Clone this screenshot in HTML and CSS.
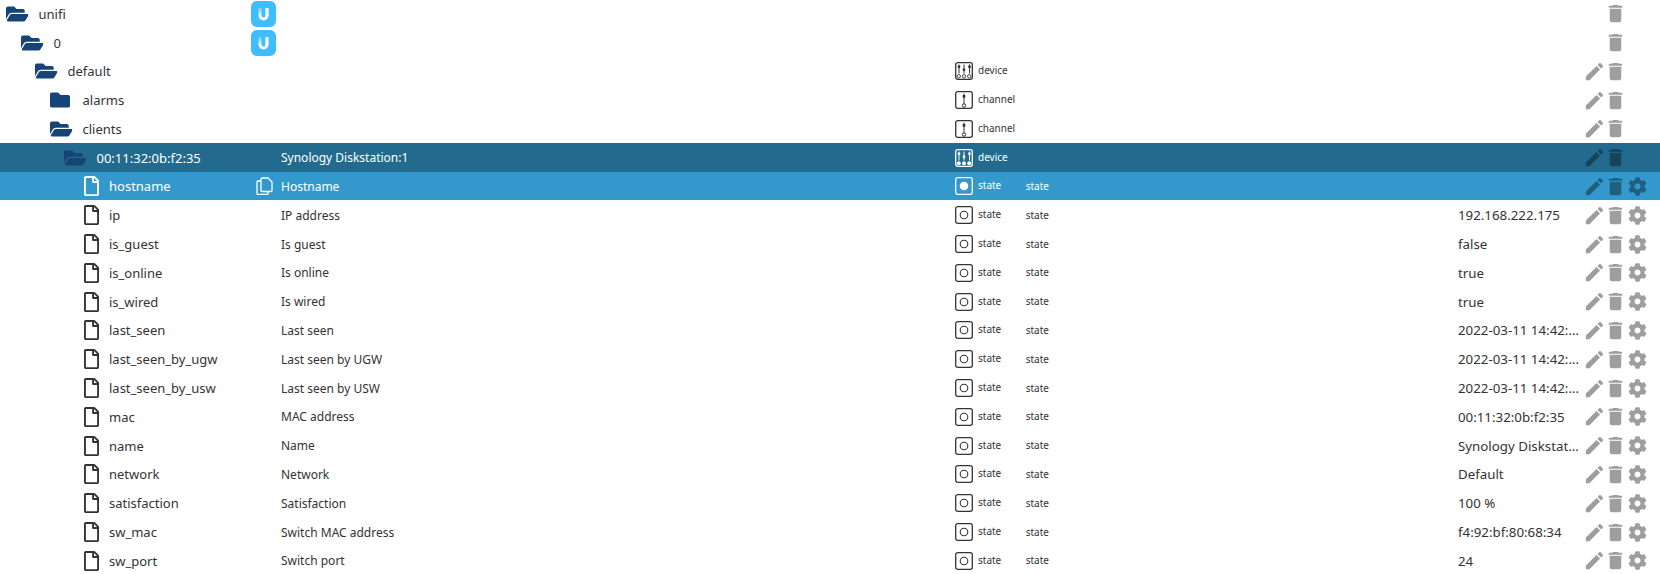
FILE: index.html
```html
<!DOCTYPE html>
<html lang="en">
<head>
<meta charset="utf-8">
<title>Objects</title>
<link rel="stylesheet" href="styles.css">
</head>
<body>
<svg class="defs" aria-hidden="true">
  <defs><linearGradient id="u-fade" x1="0" y1="0" x2="0" y2="1"><stop offset="0" stop-color="#fff" stop-opacity=".25"/><stop offset=".7" stop-color="#fff"/></linearGradient></defs>
  <symbol id="i-open" viewBox="0 0 576 512"><path d="M572.694 292.093L500.27 416.248A63.997 63.997 0 0 1 444.989 448H45.025c-18.523 0-30.064-20.093-20.731-36.093l72.424-124.155A64 64 0 0 1 152 256h399.964c18.523 0 30.064 20.093 20.73 36.093zM152 224h328v-48c0-26.51-21.49-48-48-48H272l-64-64H48C21.49 64 0 85.49 0 112v278.046l69.077-118.418C86.214 242.25 117.989 224 152 224z"/></symbol>
  <symbol id="i-folder" viewBox="0 0 512 512"><path d="M464 128H272l-64-64H48C21.49 64 0 85.49 0 112v288c0 26.51 21.49 48 48 48h416c26.51 0 48-21.49 48-48V176c0-26.51-21.49-48-48-48z"/></symbol>
  <symbol id="i-file" viewBox="0 0 384 512"><path d="M369.9 97.9L286 14C277 5 264.8-.1 252.1-.1H48C21.5 0 0 21.5 0 48v416c0 26.5 21.5 48 48 48h288c26.5 0 48-21.5 48-48V131.9c0-12.7-5.1-25-14.1-34zM332.1 128H256V51.9l76.1 76.1zM48 464V48h160v104c0 13.3 10.7 24 24 24h104v288H48z"/></symbol>
  <symbol id="i-edit" viewBox="0 0 24 24"><path d="M3 17.25V21h3.75L17.81 9.94l-3.75-3.75L3 17.25zM20.71 7.04c.39-.39.39-1.02 0-1.41l-2.34-2.34a.9959.9959 0 0 0-1.41 0l-1.83 1.83 3.75 3.75 1.83-1.83z"/></symbol>
  <symbol id="i-del" viewBox="0 0 24 24"><path d="M6 19c0 1.1.9 2 2 2h8c1.1 0 2-.9 2-2V7H6v12zM19 4h-3.5l-1-1h-5l-1 1H5v2h14V4z"/></symbol>
  <symbol id="i-cog" viewBox="0 0 512 512"><path d="M487.4 315.7l-42.6-24.6c4.3-23.2 4.3-47 0-70.2l42.6-24.6c4.9-2.8 7.1-8.6 5.5-14-11.1-35.6-30-67.8-54.7-94.6-3.8-4.1-10-5.1-14.8-2.3L380.8 110c-17.9-15.4-38.5-27.3-60.8-35.1V25.8c0-5.6-3.9-10.5-9.4-11.7-36.7-8.2-74.3-7.8-109.2 0-5.5 1.2-9.4 6.1-9.4 11.7V75c-22.2 7.9-42.8 19.8-60.8 35.1L88.7 85.5c-4.9-2.8-11-1.9-14.8 2.3-24.7 26.7-43.6 58.9-54.7 94.6-1.7 5.4.6 11.2 5.5 14L67.3 221c-4.3 23.2-4.3 47 0 70.2l-42.6 24.6c-4.9 2.8-7.1 8.6-5.5 14 11.1 35.6 30 67.8 54.7 94.6 3.8 4.1 10 5.1 14.8 2.3l42.6-24.6c17.9 15.4 38.5 27.3 60.8 35.1v49.2c0 5.6 3.9 10.5 9.4 11.7 36.7 8.2 74.3 7.8 109.2 0 5.5-1.2 9.4-6.1 9.4-11.7v-49.2c22.2-7.9 42.8-19.8 60.8-35.1l42.6 24.6c4.9 2.8 11 1.9 14.8-2.3 24.7-26.7 43.6-58.9 54.7-94.6 1.5-5.5-.7-11.3-5.6-14.1zM256 336c-44.1 0-80-35.9-80-80s35.9-80 80-80 80 35.9 80 80-35.9 80-80 80z"/></symbol>
  <symbol id="i-copy" viewBox="0 0 17 18"><path fill="none" stroke="currentColor" stroke-width="1.3" d="M6 1h6l4 4v8.5a1 1 0 0 1-1 1H6a1 1 0 0 1-1-1V2a1 1 0 0 1 1-1zM5 4H2a1 1 0 0 0-1 1v11.500a1 1 0 0 0 1 1h9a1 1 0 0 0 1-1v-2"/></symbol>
  <symbol id="i-u" viewBox="0 0 25 26"><rect width="25" height="26" rx="6" fill="#3fbdff"/><path d="M7.500 7v7.500a5 5 0 0 0 10 0V7h-3v7.500a2 2 0 0 1-4 0V7z" fill="url(#u-fade)"/><path d="M14.500 7h3v8h-3z" fill="#f4fbff"/></symbol>
  <symbol id="i-device" viewBox="0 0 18 18"><rect x=".7" y=".7" width="16.600" height="16.600" rx="2" fill="none" stroke="currentColor" stroke-width="1.300"/><path d="M4 2.500v9M9 2.500v9M14.500 2.500v9" stroke="currentColor" stroke-width="1"/><path d="M2.800 3.500h2.400v2.500H2.800zM7.800 6.500h2.400v2.500H7.800zM13.300 3.500h2.400v2.500h-2.400z" fill="currentColor"/><g fill="none" stroke="currentColor" stroke-width=".9"><circle cx="3.800" cy="14.300" r="1.700"/><circle cx="9" cy="14.300" r="1.700"/><circle cx="14.200" cy="14.300" r="1.700"/></g></symbol>
  <symbol id="i-device-on" viewBox="0 0 18 18"><rect x=".7" y=".7" width="16.600" height="16.600" rx="2" fill="none" stroke="currentColor" stroke-width="1.300"/><path d="M4 2.500v9M9 2.500v9M14.500 2.500v9" stroke="currentColor" stroke-width="1"/><path d="M2.800 3.500h2.400v2.500H2.800zM7.800 6.500h2.400v2.500H7.800zM13.300 3.500h2.400v2.500h-2.400z" fill="currentColor"/><g fill="currentColor"><circle cx="3.800" cy="14.300" r="2"/><circle cx="9" cy="14.300" r="2"/><circle cx="14.200" cy="14.300" r="2"/></g></symbol>
  <symbol id="i-channel" viewBox="0 0 18 18"><rect x=".7" y=".7" width="16.600" height="16.600" rx="2" fill="none" stroke="currentColor" stroke-width="1.300"/><path d="M9 2.500v10.500" stroke="currentColor" stroke-width="1"/><path d="M7.700 4h2.600v2.800H7.700z" fill="currentColor"/><circle cx="9" cy="14.500" r="1.700" fill="none" stroke="currentColor" stroke-width="1"/></symbol>
  <symbol id="i-state" viewBox="0 0 18 18"><rect x=".7" y=".7" width="16.600" height="16.600" rx="2" fill="none" stroke="currentColor" stroke-width="1.300"/><circle cx="9" cy="9" r="3.800" fill="none" stroke="currentColor" stroke-width="1.100"/></symbol>
  <symbol id="i-state-on" viewBox="0 0 18 18"><rect x=".7" y=".7" width="16.600" height="16.600" rx="2" fill="none" stroke="currentColor" stroke-width="1.300"/><circle cx="9" cy="9" r="4.300" fill="currentColor"/></symbol>
</svg>

<main class="tree">
  <div class="row d0">
    <div class="name"><svg class="ico folder"><use href="#i-open"/></svg><span>unifi</span></div>
    <div class="cell-icon"><svg class="logo"><use href="#i-u"/></svg></div>
    <div class="title"></div><div class="type"></div><div class="role"></div><div class="value"></div>
    <div class="actions"><i></i><svg class="act"><use href="#i-del"/></svg></div>
  </div>
  <div class="row d1">
    <div class="name"><svg class="ico folder"><use href="#i-open"/></svg><span>0</span></div>
    <div class="cell-icon"><svg class="logo"><use href="#i-u"/></svg></div>
    <div class="title"></div><div class="type"></div><div class="role"></div><div class="value"></div>
    <div class="actions"><i></i><svg class="act"><use href="#i-del"/></svg></div>
  </div>
  <div class="row d2">
    <div class="name"><svg class="ico folder"><use href="#i-open"/></svg><span>default</span></div>
    <div class="cell-icon"></div>
    <div class="title"></div>
    <div class="type"><svg class="tico"><use href="#i-device"/></svg><span>device</span></div>
    <div class="role"></div><div class="value"></div>
    <div class="actions"><svg class="act"><use href="#i-edit"/></svg><svg class="act"><use href="#i-del"/></svg></div>
  </div>
  <div class="row d3">
    <div class="name"><svg class="ico folder closed"><use href="#i-folder"/></svg><span>alarms</span></div>
    <div class="cell-icon"></div>
    <div class="title"></div>
    <div class="type"><svg class="tico"><use href="#i-channel"/></svg><span>channel</span></div>
    <div class="role"></div><div class="value"></div>
    <div class="actions"><svg class="act"><use href="#i-edit"/></svg><svg class="act"><use href="#i-del"/></svg></div>
  </div>
  <div class="row d3">
    <div class="name"><svg class="ico folder"><use href="#i-open"/></svg><span>clients</span></div>
    <div class="cell-icon"></div>
    <div class="title"></div>
    <div class="type"><svg class="tico"><use href="#i-channel"/></svg><span>channel</span></div>
    <div class="role"></div><div class="value"></div>
    <div class="actions"><svg class="act"><use href="#i-edit"/></svg><svg class="act"><use href="#i-del"/></svg></div>
  </div>
  <div class="row d4 parent">
    <div class="name"><svg class="ico folder"><use href="#i-open"/></svg><span>00:11:32:0b:f2:35</span></div>
    <div class="cell-icon"></div>
    <div class="title">Synology Diskstation:1</div>
    <div class="type"><svg class="tico"><use href="#i-device-on"/></svg><span>device</span></div>
    <div class="role"></div><div class="value"></div>
    <div class="actions"><svg class="act"><use href="#i-edit"/></svg><svg class="act"><use href="#i-del"/></svg></div>
  </div>
  <div class="row d5 selected">
    <div class="name"><svg class="ico file"><use href="#i-file"/></svg><span>hostname</span></div>
    <div class="cell-icon"><svg class="copy"><use href="#i-copy"/></svg></div>
    <div class="title">Hostname</div>
    <div class="type"><svg class="tico"><use href="#i-state-on"/></svg><span>state</span></div>
    <div class="role">state</div><div class="value"></div>
    <div class="actions"><svg class="act"><use href="#i-edit"/></svg><svg class="act"><use href="#i-del"/></svg><svg class="act cog"><use href="#i-cog"/></svg></div>
  </div>
  <div class="row d5">
    <div class="name"><svg class="ico file"><use href="#i-file"/></svg><span>ip</span></div>
    <div class="cell-icon"></div>
    <div class="title">IP address</div>
    <div class="type"><svg class="tico"><use href="#i-state"/></svg><span>state</span></div>
    <div class="role">state</div><div class="value">192.168.222.175</div>
    <div class="actions"><svg class="act"><use href="#i-edit"/></svg><svg class="act"><use href="#i-del"/></svg><svg class="act cog"><use href="#i-cog"/></svg></div>
  </div>
  <div class="row d5">
    <div class="name"><svg class="ico file"><use href="#i-file"/></svg><span>is_guest</span></div>
    <div class="cell-icon"></div>
    <div class="title">Is guest</div>
    <div class="type"><svg class="tico"><use href="#i-state"/></svg><span>state</span></div>
    <div class="role">state</div><div class="value">false</div>
    <div class="actions"><svg class="act"><use href="#i-edit"/></svg><svg class="act"><use href="#i-del"/></svg><svg class="act cog"><use href="#i-cog"/></svg></div>
  </div>
  <div class="row d5">
    <div class="name"><svg class="ico file"><use href="#i-file"/></svg><span>is_online</span></div>
    <div class="cell-icon"></div>
    <div class="title">Is online</div>
    <div class="type"><svg class="tico"><use href="#i-state"/></svg><span>state</span></div>
    <div class="role">state</div><div class="value">true</div>
    <div class="actions"><svg class="act"><use href="#i-edit"/></svg><svg class="act"><use href="#i-del"/></svg><svg class="act cog"><use href="#i-cog"/></svg></div>
  </div>
  <div class="row d5">
    <div class="name"><svg class="ico file"><use href="#i-file"/></svg><span>is_wired</span></div>
    <div class="cell-icon"></div>
    <div class="title">Is wired</div>
    <div class="type"><svg class="tico"><use href="#i-state"/></svg><span>state</span></div>
    <div class="role">state</div><div class="value">true</div>
    <div class="actions"><svg class="act"><use href="#i-edit"/></svg><svg class="act"><use href="#i-del"/></svg><svg class="act cog"><use href="#i-cog"/></svg></div>
  </div>
  <div class="row d5">
    <div class="name"><svg class="ico file"><use href="#i-file"/></svg><span>last_seen</span></div>
    <div class="cell-icon"></div>
    <div class="title">Last seen</div>
    <div class="type"><svg class="tico"><use href="#i-state"/></svg><span>state</span></div>
    <div class="role">state</div><div class="value">2022-03-11 14:42:12</div>
    <div class="actions"><svg class="act"><use href="#i-edit"/></svg><svg class="act"><use href="#i-del"/></svg><svg class="act cog"><use href="#i-cog"/></svg></div>
  </div>
  <div class="row d5">
    <div class="name"><svg class="ico file"><use href="#i-file"/></svg><span>last_seen_by_ugw</span></div>
    <div class="cell-icon"></div>
    <div class="title">Last seen by UGW</div>
    <div class="type"><svg class="tico"><use href="#i-state"/></svg><span>state</span></div>
    <div class="role">state</div><div class="value">2022-03-11 14:42:12</div>
    <div class="actions"><svg class="act"><use href="#i-edit"/></svg><svg class="act"><use href="#i-del"/></svg><svg class="act cog"><use href="#i-cog"/></svg></div>
  </div>
  <div class="row d5">
    <div class="name"><svg class="ico file"><use href="#i-file"/></svg><span>last_seen_by_usw</span></div>
    <div class="cell-icon"></div>
    <div class="title">Last seen by USW</div>
    <div class="type"><svg class="tico"><use href="#i-state"/></svg><span>state</span></div>
    <div class="role">state</div><div class="value">2022-03-11 14:42:12</div>
    <div class="actions"><svg class="act"><use href="#i-edit"/></svg><svg class="act"><use href="#i-del"/></svg><svg class="act cog"><use href="#i-cog"/></svg></div>
  </div>
  <div class="row d5">
    <div class="name"><svg class="ico file"><use href="#i-file"/></svg><span>mac</span></div>
    <div class="cell-icon"></div>
    <div class="title">MAC address</div>
    <div class="type"><svg class="tico"><use href="#i-state"/></svg><span>state</span></div>
    <div class="role">state</div><div class="value">00:11:32:0b:f2:35</div>
    <div class="actions"><svg class="act"><use href="#i-edit"/></svg><svg class="act"><use href="#i-del"/></svg><svg class="act cog"><use href="#i-cog"/></svg></div>
  </div>
  <div class="row d5">
    <div class="name"><svg class="ico file"><use href="#i-file"/></svg><span>name</span></div>
    <div class="cell-icon"></div>
    <div class="title">Name</div>
    <div class="type"><svg class="tico"><use href="#i-state"/></svg><span>state</span></div>
    <div class="role">state</div><div class="value">Synology Diskstation:1</div>
    <div class="actions"><svg class="act"><use href="#i-edit"/></svg><svg class="act"><use href="#i-del"/></svg><svg class="act cog"><use href="#i-cog"/></svg></div>
  </div>
  <div class="row d5">
    <div class="name"><svg class="ico file"><use href="#i-file"/></svg><span>network</span></div>
    <div class="cell-icon"></div>
    <div class="title">Network</div>
    <div class="type"><svg class="tico"><use href="#i-state"/></svg><span>state</span></div>
    <div class="role">state</div><div class="value">Default</div>
    <div class="actions"><svg class="act"><use href="#i-edit"/></svg><svg class="act"><use href="#i-del"/></svg><svg class="act cog"><use href="#i-cog"/></svg></div>
  </div>
  <div class="row d5">
    <div class="name"><svg class="ico file"><use href="#i-file"/></svg><span>satisfaction</span></div>
    <div class="cell-icon"></div>
    <div class="title">Satisfaction</div>
    <div class="type"><svg class="tico"><use href="#i-state"/></svg><span>state</span></div>
    <div class="role">state</div><div class="value">100 %</div>
    <div class="actions"><svg class="act"><use href="#i-edit"/></svg><svg class="act"><use href="#i-del"/></svg><svg class="act cog"><use href="#i-cog"/></svg></div>
  </div>
  <div class="row d5">
    <div class="name"><svg class="ico file"><use href="#i-file"/></svg><span>sw_mac</span></div>
    <div class="cell-icon"></div>
    <div class="title">Switch MAC address</div>
    <div class="type"><svg class="tico"><use href="#i-state"/></svg><span>state</span></div>
    <div class="role">state</div><div class="value">f4:92:bf:80:68:34</div>
    <div class="actions"><svg class="act"><use href="#i-edit"/></svg><svg class="act"><use href="#i-del"/></svg><svg class="act cog"><use href="#i-cog"/></svg></div>
  </div>
  <div class="row d5">
    <div class="name"><svg class="ico file"><use href="#i-file"/></svg><span>sw_port</span></div>
    <div class="cell-icon"></div>
    <div class="title">Switch port</div>
    <div class="type"><svg class="tico"><use href="#i-state"/></svg><span>state</span></div>
    <div class="role">state</div><div class="value">24</div>
    <div class="actions"><svg class="act"><use href="#i-edit"/></svg><svg class="act"><use href="#i-del"/></svg><svg class="act cog"><use href="#i-cog"/></svg></div>
  </div>
</main>
</body>
</html>
```

FILE: styles.css
```css
html, body { margin: 0; padding: 0; height: 100%; overflow: hidden; background: #fff; }
body { font-family: "Noto Sans", "Open Sans", sans-serif; color: #333; }
.defs { position: absolute; width: 0; height: 0; }

.tree { display: flex; flex-direction: column; margin-top: -1.2px; }
.row {
  flex: none;
  box-sizing: border-box;
  height: 28.8px;
  padding-top: 1px;
  display: grid;
  grid-template-columns: 251px 30px 674px 70.7px 432.3px 125.5px 1fr;
  align-items: center;
  white-space: nowrap;
}
.d0 .name { padding-left: 6px; }
.d1 .name { padding-left: 21px; }
.d2 .name { padding-left: 35px; }
.d3 .name { padding-left: 50px; }
.d4 .name { padding-left: 64px; }
.d5 .name { padding-left: 84px; }

.name { display: flex; align-items: center; font-size: 13px; min-width: 0; }
.ico { flex: none; fill: currentColor; }
.folder { width: 22.5px; height: 20px; color: #164477; margin-right: 10px; }
.folder.closed { width: 20px; margin-right: 12.5px; }
.file { width: 15px; height: 20px; color: #333; margin-right: 10px; }

.cell-icon { display: flex; height: 100%; align-items: center; }
.logo { width: 25px; height: 26px; }
.copy { width: 17px; height: 18px; margin-left: 5px; color: #fff; }

.title { font-size: 12px; }
.type { display: flex; align-items: center; gap: 5px; font-size: 10px; }
.type span { position: relative; top: -1px; }
.tico { width: 18px; height: 18px; color: #333; flex: none; }
.role { font-size: 10px; line-height: 1; padding-bottom: 1px; }
.value { font-size: 13.3px; overflow: hidden; text-overflow: ellipsis; padding-right: 1.5px; }

.actions { display: grid; grid-template-columns: 22px 21px 22.5px; justify-items: center; align-items: center; }
.act { width: 23px; height: 23px; fill: #9e9e9e; }
.act.cog { width: 19px; height: 19px; }

.parent { background: #236b8e; color: #fff; }
.parent .act { fill: #17445a; }
.parent .tico { color: #fff; }
.selected { background: #3399cc; color: #fff; }
.selected .file { color: #fff; }
.selected .tico { color: #fff; }
.selected .act { fill: #1f5f80; }
```
